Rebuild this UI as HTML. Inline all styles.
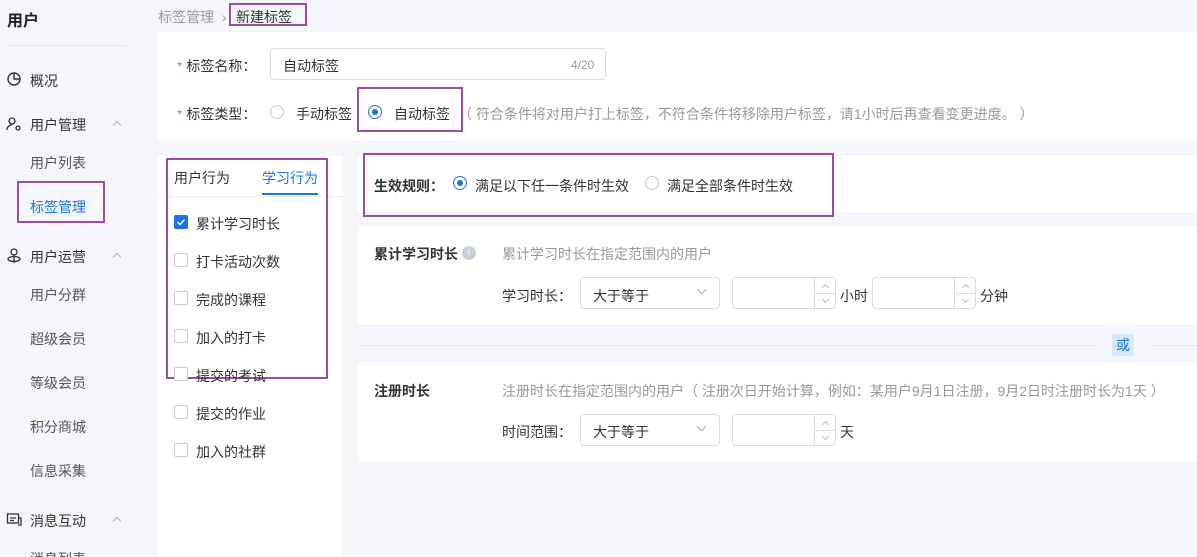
<!DOCTYPE html>
<html style="width:1197px;height:557px;overflow:hidden"><head><meta charset="utf-8"><style>
*{margin:0;padding:0;box-sizing:border-box}
body{width:1197px;height:557px;overflow:hidden;background:#f5f6fa;font-family:"Liberation Sans","Noto Sans CJK SC",sans-serif;font-size:14px;color:#333;position:relative}
.a{position:absolute;white-space:nowrap;margin-top:1px}
.card{position:absolute;background:#fff}
.pb{position:absolute;border:2px solid #9b4ba6}
.g{color:#999}
.radio{position:absolute;width:14px;height:14px;border:1px solid #ccc;border-radius:50%;background:#fff}
.radio.on{border-color:#1a73e8}
.radio.on::after{content:"";position:absolute;left:3px;top:3px;width:6px;height:6px;border-radius:50%;background:#1a73e8}
.cb{position:absolute;width:14px;height:14px;border:1px solid #ccc;border-radius:2px;background:#fff}
.cb.on{background:#1a73e8;border-color:#1a73e8}
.inp{position:absolute;border:1px solid #dcdcdc;border-radius:4px;background:#fff}
.chev{position:absolute;width:7px;height:7px;border-right:1px solid #aaa;border-bottom:1px solid #aaa;transform:rotate(45deg)}
.up{position:absolute;width:6px;height:6px;border-left:1px solid #aaa;border-top:1px solid #aaa;transform:rotate(45deg)}
.spin{position:absolute;right:0;top:0;width:21px;height:100%;border-left:1px solid #dcdcdc}
.spin::after{content:"";position:absolute;left:0;right:0;top:50%;border-top:1px solid #dcdcdc}
.sm{position:absolute;width:5px;height:5px;border-left:1px solid #bbb;border-top:1px solid #bbb;left:8px}
</style></head><body>
<div class="a" style="left:7px;top:6px;font-size:16px;font-weight:bold;color:#222">用户</div>
<div class="a" style="left:6px;top:44px;width:120px;border-top:1px solid #e5e6ea"></div>
<svg class="a" style="left:7px;top:71px" width="14" height="14" viewBox="0 0 14 14"><circle cx="7" cy="7" r="6" fill="none" stroke="#333" stroke-width="1.4"/><path d="M7 1V7H13" fill="none" stroke="#333" stroke-width="1.4"/></svg>
<div class="a" style="left:30px;top:70px">概况</div>
<svg class="a" style="left:6px;top:115px" width="16" height="16" viewBox="0 0 16 16"><circle cx="6" cy="5" r="3" fill="none" stroke="#333" stroke-width="1.3"/><path d="M1 14c0-3 2-5 5-5" fill="none" stroke="#333" stroke-width="1.3"/><circle cx="12" cy="12" r="2" fill="none" stroke="#333" stroke-width="1.3"/></svg>
<div class="a" style="left:30px;top:114px">用户管理</div>
<div class="up" style="left:114px;top:122px"></div>
<div class="a" style="left:30px;top:152px;color:#555">用户列表</div>
<div class="pb" style="left:17px;top:181px;width:88px;height:42px"></div>
<div class="a" style="left:30px;top:196px;color:#1a73e8">标签管理</div>
<svg class="a" style="left:6px;top:247px" width="16" height="16" viewBox="0 0 16 16"><circle cx="8" cy="4" r="3" fill="none" stroke="#333" stroke-width="1.3"/><ellipse cx="8" cy="11" rx="6" ry="2.5" fill="none" stroke="#333" stroke-width="1.3"/><path d="M8 7v8" stroke="#333" stroke-width="1.3"/></svg>
<div class="a" style="left:30px;top:246px">用户运营</div>
<div class="up" style="left:114px;top:254px"></div>
<div class="a" style="left:30px;top:284px;color:#555">用户分群</div>
<div class="a" style="left:30px;top:328px;color:#555">超级会员</div>
<div class="a" style="left:30px;top:372px;color:#555">等级会员</div>
<div class="a" style="left:30px;top:416px;color:#555">积分商城</div>
<div class="a" style="left:30px;top:460px;color:#555">信息采集</div>
<svg class="a" style="left:6px;top:511px" width="16" height="16" viewBox="0 0 16 16"><rect x="1.5" y="2" width="11" height="9" fill="none" stroke="#333" stroke-width="1.3"/><path d="M4 6h6M4 8.5h4M12.5 6H15v7h-3" fill="none" stroke="#333" stroke-width="1.3"/></svg>
<div class="a" style="left:30px;top:510px">消息互动</div>
<div class="up" style="left:114px;top:518px"></div>
<div class="a" style="left:30px;top:548px;color:#555;height:9px;overflow:hidden">消息列表</div>
<div class="a g" style="left:158px;top:6px">标签管理 <span style="margin-left:4px">›</span></div>
<div class="pb" style="left:229px;top:3px;width:78px;height:23px"></div>
<div class="a" style="left:236px;top:6px;color:#333">新建标签</div>
<div class="card" style="left:158px;top:32px;width:1039px;height:108px"></div>
<div class="a" style="left:177px;top:55px"><span style="color:#f56c6c">*</span> 标签名称：</div>
<div class="inp" style="left:270px;top:48px;width:336px;height:32px"></div>
<div class="a" style="left:283px;top:55px">自动标签</div>
<div class="a g" style="left:571px;top:57px;font-size:12px">4/20</div>
<div class="a" style="left:177px;top:103px"><span style="color:#f56c6c">*</span> 标签类型：</div>
<div class="radio" style="left:270px;top:105px"></div>
<div class="a" style="left:296px;top:103px">手动标签</div>
<div class="pb" style="left:357px;top:87px;width:106px;height:45px"></div>
<div class="radio on" style="left:368px;top:105px"></div>
<div class="a" style="left:394px;top:103px">自动标签</div>
<div class="a g" style="left:458px;top:103px">（ 符合条件将对用户打上标签，不符合条件将移除用户标签，请1小时后再查看变更进度。 ）</div>
<div class="card" style="left:158px;top:156px;width:184px;height:401px"></div>
<div class="a" style="left:174px;top:167px">用户行为</div>
<div class="a" style="left:262px;top:167px;color:#1a73e8">学习行为</div>
<div class="a" style="left:262px;top:192px;width:56px;border-top:2px solid #1a73e8"></div>
<div class="a" style="left:158px;top:195px;width:184px;border-top:1px solid #eee"></div>
<div class="pb" style="left:166px;top:158px;width:162px;height:221px"></div>
<div class="cb on" style="left:174px;top:215px"></div>
<svg class="a" style="left:176px;top:216px" width="10" height="10" viewBox="0 0 10 10"><path d="M1.5 5l2.5 2.5 4.5-5" fill="none" stroke="#fff" stroke-width="1.4"/></svg>
<div class="a" style="left:196px;top:213px">累计学习时长</div>
<div class="cb" style="left:174px;top:253px"></div><div class="a" style="left:196px;top:251px">打卡活动次数</div>
<div class="cb" style="left:174px;top:291px"></div><div class="a" style="left:196px;top:289px">完成的课程</div>
<div class="cb" style="left:174px;top:329px"></div><div class="a" style="left:196px;top:327px">加入的打卡</div>
<div class="cb" style="left:174px;top:367px"></div><div class="a" style="left:196px;top:365px">提交的考试</div>
<div class="cb" style="left:174px;top:405px"></div><div class="a" style="left:196px;top:403px">提交的作业</div>
<div class="cb" style="left:174px;top:443px"></div><div class="a" style="left:196px;top:441px">加入的社群</div>
<div class="card" style="left:358px;top:156px;width:839px;height:56px"></div>
<div class="pb" style="left:363px;top:153px;width:471px;height:64px"></div>
<div class="a" style="left:374px;top:175px;font-weight:bold">生效规则：</div>
<div class="radio on" style="left:453px;top:176px"></div>
<div class="a" style="left:475px;top:175px">满足以下任一条件时生效</div>
<div class="radio" style="left:645px;top:176px"></div>
<div class="a" style="left:667px;top:175px">满足全部条件时生效</div>
<div class="card" style="left:358px;top:226px;width:839px;height:98px"></div>
<div class="a" style="left:374px;top:243px;font-weight:bold">累计学习时长</div>
<div class="a" style="left:462px;top:245px;width:14px;height:14px;border-radius:50%;background:#c8cedb;color:#fff;font-size:10px;text-align:center;line-height:14px">i</div>
<div class="a g" style="left:502px;top:243px">累计学习时长在指定范围内的用户</div>
<div class="a" style="left:502px;top:285px">学习时长：</div>
<div class="inp" style="left:580px;top:277px;width:140px;height:32px"></div>
<div class="a" style="left:593px;top:285px">大于等于</div>
<div class="chev" style="left:698px;top:286px"></div>
<div class="inp" style="left:732px;top:277px;width:104px;height:32px"><div class="spin"><div class="sm" style="top:7px;transform:rotate(45deg)"></div><div class="sm" style="top:19px;transform:rotate(225deg)"></div></div></div>
<div class="a" style="left:840px;top:285px">小时</div>
<div class="inp" style="left:872px;top:277px;width:104px;height:32px"><div class="spin"><div class="sm" style="top:7px;transform:rotate(45deg)"></div><div class="sm" style="top:19px;transform:rotate(225deg)"></div></div></div>
<div class="a" style="left:980px;top:285px">分钟</div>
<div class="a" style="left:358px;top:344px;width:738px;border-top:1px solid #e6e8ec"></div>
<div class="a" style="left:1150px;top:344px;width:47px;border-top:1px solid #e6e8ec"></div>
<div class="a" style="left:1112px;top:333px;width:22px;height:22px;background:#d9e7fc;color:#1a73e8;text-align:center;line-height:22px;border-radius:2px">或</div>
<div class="card" style="left:358px;top:363px;width:839px;height:99px"></div>
<div class="a" style="left:374px;top:380px;font-weight:bold">注册时长</div>
<div class="a g" style="left:502px;top:380px">注册时长在指定范围内的用户（ 注册次日开始计算，例如：某用户9月1日注册，9月2日时注册时长为1天 ）</div>
<div class="a" style="left:502px;top:421px">时间范围：</div>
<div class="inp" style="left:580px;top:414px;width:140px;height:32px"></div>
<div class="a" style="left:593px;top:421px">大于等于</div>
<div class="chev" style="left:698px;top:423px"></div>
<div class="inp" style="left:732px;top:414px;width:104px;height:32px"><div class="spin"><div class="sm" style="top:7px;transform:rotate(45deg)"></div><div class="sm" style="top:19px;transform:rotate(225deg)"></div></div></div>
<div class="a" style="left:840px;top:421px">天</div>
</body></html>
